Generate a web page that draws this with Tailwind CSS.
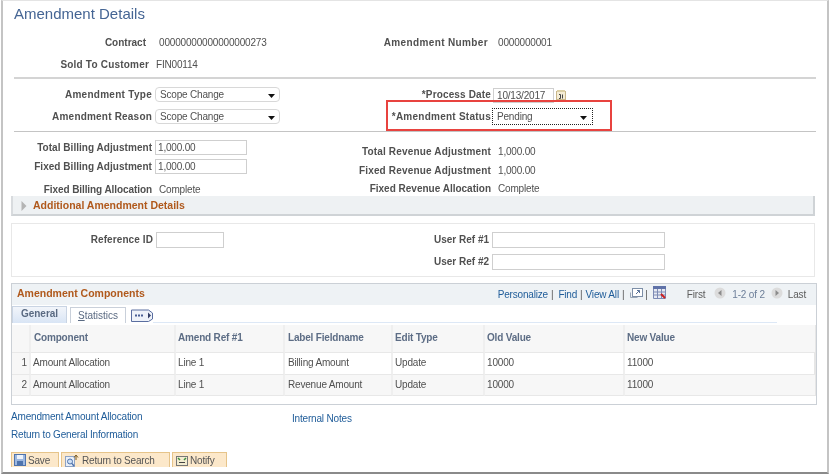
<!DOCTYPE html>
<html lang="en">

<head>
    <meta charset="UTF-8" />
    <title>Amendment Details</title>
    <script src="https://cdn.jsdelivr.net/npm/@tailwindcss/browser@4"></script>
</head>

<body class="bg-white">
    <div class="relative ml-px w-[828px] h-[474px] box-border border-t border-t-[#e4e4e4] border-l-2 border-l-[#c4c4c4] border-r-2 border-r-[#c4c4c4] border-b-2 border-b-[#8a8a8a] overflow-hidden blur-[0.3px] font-['Liberation_Sans',Arial,sans-serif] text-[10px] tracking-[-0.18px] text-[#505050]">

        <!-- Title -->
        <div class="h-[27px] pl-[11px] text-[15px] tracking-normal leading-[25px] text-[#456594]">Amendment Details</div>

        <!-- Contract -->
        <div class="flex h-[28px] items-center">
            <div class="w-[143px] text-right tracking-normal font-bold">Contract</div>
            <div class="w-[225px] pl-[13px] pt-px">00000000000000000273</div>
            <div class="w-[117px] text-right tracking-[0.37px] font-bold">Amendment Number</div>
            <div class="pl-[10px] pt-px">0000000001</div>
        </div>
        <div class="flex h-[16px] items-center">
            <div class="w-[146px] text-right tracking-[0.2px] font-bold">Sold To Customer</div>
            <div class="pl-[7px]">FIN00114</div>
        </div>
        <div class="mt-[5px] ml-[11px] w-[802px] h-[2px] bg-[#d4d4d4]"></div>

        <!-- Type / Reason / Date / Status -->
        <div class="flex mt-[8px] h-[15px] items-center">
            <div class="w-[149px] text-right tracking-[0.28px] font-bold">Amendment Type</div>
            <div class="ml-[3px] w-[125px] h-[15px] box-border border border-[#d8d8d8] rounded-sm flex items-center justify-between pl-[4px] pr-[2px]">
                <span>Scope Change</span>
                <svg width="7" height="4" viewBox="0 0 7 4" class="mr-[2px] mt-[2px]"><path d="M0 0h7L3.500 4z" fill="#111" /></svg>
            </div>
            <div class="w-[211px] text-right tracking-[0.15px] font-bold">*Process Date</div>
            <div class="ml-[2px] mt-[2px] w-[61px] h-[15px] box-border border border-[#cfcfcf] pl-[3px] leading-[14px]">10/13/2017</div>
            <svg width="10" height="10" viewBox="0 0 10 10" class="ml-[2px] mt-[1px]">
                <rect x="0.500" y="1.500" width="9" height="8" fill="#f5edd6" stroke="#c9b78a" />
                <rect x="1" y="0" width="8" height="2" fill="#dccfa5" />
                <path d="M3 4.500h1.500v4H3M6.500 4.500v4" stroke="#444" fill="none" />
            </svg>
        </div>
        <div class="flex mt-[7px] h-[15px] items-center">
            <div class="w-[149px] text-right tracking-[0.2px] font-bold">Amendment Reason</div>
            <div class="ml-[3px] w-[125px] h-[15px] box-border border border-[#d8d8d8] rounded-sm flex items-center justify-between pl-[4px] pr-[2px]">
                <span>Scope Change</span>
                <svg width="7" height="4" viewBox="0 0 7 4" class="mr-[2px] mt-[2px]"><path d="M0 0h7L3.500 4z" fill="#111" /></svg>
            </div>
            <div class="w-[211px] text-right tracking-[0.25px] font-bold">*Amendment Status</div>
            <div class="ml-[1px] w-[101px] h-[17px] box-border border border-dotted border-[#222] flex items-center justify-between pl-[4px] pr-[2px]">
                <span>Pending</span>
                <svg width="7" height="4" viewBox="0 0 7 4" class="mr-[3px] mt-[2px]"><path d="M0 0h7L3.500 4z" fill="#111" /></svg>
            </div>
        </div>
        <div class="mt-[7px] ml-[11px] w-[802px] h-px bg-[#c4c4c4]"></div>

        <!-- Highlight drawn over the status row -->
        <div class="absolute left-[383px] top-[99px] w-[226px] h-[31px] box-border border-[2px] border-[#e8433f]"></div>

        <!-- Adjustments -->
        <div class="flex h-[64px]">
            <div class="w-[244px] pt-[8px]">
                <div class="flex h-[15px] items-center">
                    <div class="w-[149px] text-right tracking-[0.04px] font-bold">Total Billing Adjustment</div>
                    <div class="ml-[3px] w-[92px] h-[15px] box-border border border-[#cfcfcf] pl-[2px] leading-[14px]">1,000.00</div>
                </div>
                <div class="flex h-[15px] items-center mt-[4px]">
                    <div class="w-[149px] text-right tracking-[0.04px] font-bold">Fixed Billing Adjustment</div>
                    <div class="ml-[3px] w-[92px] h-[15px] box-border border border-[#cfcfcf] pl-[2px] leading-[14px]">1,000.00</div>
                </div>
                <div class="flex h-[14px] items-center mt-[8px]">
                    <div class="w-[149px] text-right tracking-[-0.08px] font-bold">Fixed Billing Allocation</div>
                    <div class="pl-[7px]">Complete</div>
                </div>
            </div>
            <div class="pt-[12px]">
                <div class="flex h-[14px] items-center">
                    <div class="w-[244px] text-right tracking-[0.17px] font-bold">Total Revenue Adjustment</div>
                    <div class="pl-[7px] pt-px">1,000.00</div>
                </div>
                <div class="flex h-[14px] items-center mt-[5px]">
                    <div class="w-[244px] text-right tracking-[0.17px] font-bold">Fixed Revenue Adjustment</div>
                    <div class="pl-[7px] pt-px">1,000.00</div>
                </div>
                <div class="flex h-[14px] items-center mt-[4px]">
                    <div class="w-[244px] text-right tracking-normal font-bold">Fixed Revenue Allocation</div>
                    <div class="pl-[7px] pt-px">Complete</div>
                </div>
            </div>
        </div>

        <!-- Collapsed section -->
        <div class="ml-[8px] w-[804px] h-[20px] box-border bg-[#eef1f3] border-l-2 border-l-[#d8dbde] border-r-2 border-r-[#cfd3d6] border-b-2 border-b-[#cfd3d6] flex items-center pt-px">
            <svg width="6" height="10" viewBox="0 0 6 10" class="ml-[8px]"><path d="M0.500 0v10L5.500 5z" fill="#b4b4b4" /></svg>
            <span class="ml-[6px] text-[10.500px] tracking-normal font-bold text-[#b0591c]">Additional Amendment Details</span>
        </div>

        <!-- References -->
        <div class="mt-[7px] ml-[8px] w-[804px] h-[54px] box-border border border-[#e8e8e8] pt-[8px]">
            <div class="flex h-[16px] items-center">
                <div class="w-[141px] mb-[2px] text-right tracking-[0.1px] font-bold">Reference ID</div>
                <div class="ml-[3px] w-[68px] h-[16px] box-border border border-[#cfcfcf]"></div>
                <div class="w-[265px] mb-[2px] text-right tracking-normal font-bold">User Ref #1</div>
                <div class="ml-[3px] w-[173px] h-[16px] box-border border border-[#cfcfcf]"></div>
            </div>
            <div class="flex h-[16px] items-center mt-[6px]">
                <div class="w-[477px] mb-[2px] text-right tracking-normal font-bold">User Ref #2</div>
                <div class="ml-[3px] w-[173px] h-[16px] box-border border border-[#cfcfcf]"></div>
            </div>
        </div>

        <!-- Grid -->
        <div class="mt-[6px] ml-[8px] w-[806px] h-[122px] box-border border border-[#cbd0d6]">
            <div class="h-[21px] bg-[#eef2f5] flex items-center pl-[5px] pb-[1px]">
                <span class="text-[10.500px] tracking-normal font-bold text-[#b0591c]">Amendment Components</span>
                <div class="ml-auto flex items-center text-[#5c5c5c]">
                    <span class="text-[#1f5c99]">Personalize</span>
                    <span class="ml-[3px]">|</span>
                    <span class="ml-[5px] text-[#1f5c99]">Find</span>
                    <span class="ml-[3px]">|</span>
                    <span class="ml-[3px] text-[#1f5c99]">View All</span>
                    <span class="ml-[3px]">|</span>
                    <svg width="13" height="11" viewBox="0 0 13 11" class="ml-[6px] mb-[2px]">
                        <path d="M0.500 4.500v5h7" fill="none" stroke="#9aa7b8" />
                        <rect x="2.500" y="0.500" width="10" height="8" fill="#fff" stroke="#7d8fa8" />
                        <path d="M6 6l3.500-3.500M7 2.500h2.500V5" fill="none" stroke="#5a7398" />
                    </svg>
                    <span class="ml-[2px]">|</span>
                    <svg width="13" height="13" viewBox="0 0 13 13" class="ml-[5px] mb-[3px]">
                        <rect x="0" y="0" width="13" height="3" fill="#5f72a8" />
                        <path d="M0.500 3v9.500h12V3M4.500 3v9.500M8.500 3v9.500M0.500 6h12M0.500 9h12" fill="#e6e9f2" stroke="#7d8bb5" />
                        <path d="M8 8l4 4" stroke="#cc2020" stroke-width="2" />
                    </svg>
                    <span class="ml-[21px]">First</span>
                    <svg width="12" height="12" viewBox="0 0 12 12" class="ml-[9px] mb-[2px]">
                        <circle cx="6" cy="6" r="5.500" fill="#dcdcdc" />
                        <path d="M7.500 3v6L4 6z" fill="#8c8c8c" />
                    </svg>
                    <span class="ml-[6px] text-[#6d7f99]">1-2 of 2</span>
                    <svg width="12" height="12" viewBox="0 0 12 12" class="ml-[6px] mb-[2px]">
                        <circle cx="6" cy="6" r="5.500" fill="#dcdcdc" />
                        <path d="M4.500 3v6L8 6z" fill="#8c8c8c" />
                    </svg>
                    <span class="ml-[5px] mr-[10px]">Last</span>
                </div>
            </div>

            <!-- Tabs -->
            <div class="flex items-end h-[18px] pt-px">
                <div class="w-[55px] h-[17px] box-border border border-b-0 border-[#c9d4e3] bg-linear-to-b from-[#f2f5fa] to-[#d9e5f5] text-center tracking-normal font-bold leading-[14px] text-[#5a6a82]">General</div>
                <div class="ml-[3px] w-[56px] h-[16px] box-border border border-b-0 border-[#c9d0da] text-center tracking-normal leading-[15px] text-[#5a6a82]"><span class="underline">S</span>tatistics</div>
                <svg width="22" height="13" viewBox="0 0 22 13" class="ml-[5px] mb-px">
                    <path d="M0.500 1h17l4 3v6l-4 2.500h-17z" fill="#eef2f9" stroke="#5a6ea0" />
                    <path d="M4 6.500h9" stroke="#4a5f95" stroke-width="2" stroke-dasharray="2 1" />
                    <path d="M17 3.500v6l3-3z" fill="#333e66" />
                </svg>
                <div class="flex-1 mr-[39px] h-px bg-[#dde8f6]"></div>
            </div>

            <!-- Table -->
            <div class="mt-[2px] grid grid-cols-[19px_145px_109px_108px_92px_140px_190px] grid-rows-[27px_22px_22px] border-r-2 border-r-[#e6e6e6]">
                <div class="bg-[#f7f7f7] border-r-2 border-[#efefef]"></div>
                <div class="bg-[#f7f7f7] border-r-2 border-[#efefef] pl-[3px] pb-[2px] flex items-center font-bold text-[#5d6d85]">Component</div>
                <div class="bg-[#f7f7f7] border-r-2 border-[#efefef] pl-[2px] pb-[2px] flex items-center font-bold text-[#5d6d85]">Amend Ref #1</div>
                <div class="bg-[#f7f7f7] border-r-2 border-[#efefef] pl-[3px] pb-[2px] flex items-center font-bold text-[#5d6d85]">Label Fieldname</div>
                <div class="bg-[#f7f7f7] border-r-2 border-[#efefef] pl-[2px] pb-[2px] flex items-center font-bold text-[#5d6d85]">Edit Type</div>
                <div class="bg-[#f7f7f7] border-r-2 border-[#efefef] pl-[2px] pb-[2px] flex items-center font-bold text-[#5d6d85]">Old Value</div>
                <div class="bg-[#f7f7f7] pl-[2px] pb-[2px] flex items-center font-bold text-[#5d6d85]">New Value</div>

                <div class="bg-[#f7f7f7] border-t border-[#e8e8e8] border-r-2 border-r-[#efefef] pr-[2px] pb-[2px] flex items-center justify-end">1</div>
                <div class="border-t border-[#e8e8e8] border-r-2 border-r-[#efefef] pl-[2px] pb-[2px] flex items-center">Amount Allocation</div>
                <div class="border-t border-[#e8e8e8] border-r-2 border-r-[#efefef] pl-[2px] pb-[2px] flex items-center">Line 1</div>
                <div class="border-t border-[#e8e8e8] border-r-2 border-r-[#efefef] pl-[3px] pb-[2px] flex items-center">Billing Amount</div>
                <div class="border-t border-[#e8e8e8] border-r-2 border-r-[#efefef] pl-[2px] pb-[2px] flex items-center">Update</div>
                <div class="border-t border-[#e8e8e8] border-r-2 border-r-[#efefef] pl-[2px] pb-[2px] flex items-center">10000</div>
                <div class="border-t border-[#e8e8e8] pl-[2px] pb-[2px] flex items-center">11000</div>

                <div class="bg-[#f7f7f7] border-y border-[#e8e8e8] border-r-2 border-r-[#efefef] pr-[2px] pb-[1px] flex items-center justify-end">2</div>
                <div class="bg-[#f7f7f7] border-y border-[#e8e8e8] border-r-2 border-r-[#efefef] pl-[2px] pb-[1px] flex items-center">Amount Allocation</div>
                <div class="bg-[#f7f7f7] border-y border-[#e8e8e8] border-r-2 border-r-[#efefef] pl-[2px] pb-[1px] flex items-center">Line 1</div>
                <div class="bg-[#f7f7f7] border-y border-[#e8e8e8] border-r-2 border-r-[#efefef] pl-[3px] pb-[1px] flex items-center">Revenue Amount</div>
                <div class="bg-[#f7f7f7] border-y border-[#e8e8e8] border-r-2 border-r-[#efefef] pl-[2px] pb-[1px] flex items-center">Update</div>
                <div class="bg-[#f7f7f7] border-y border-[#e8e8e8] border-r-2 border-r-[#efefef] pl-[2px] pb-[1px] flex items-center">10000</div>
                <div class="bg-[#f7f7f7] border-y border-[#e8e8e8] pl-[2px] pb-[1px] flex items-center">11000</div>
            </div>
        </div>

        <!-- Links -->
        <div class="flex mt-[5px] pl-[8px] text-[#1f5c99]">
            <div class="w-[281px]">
                <div class="h-[14px] leading-[14px]">Amendment Amount Allocation</div>
                <div class="h-[14px] leading-[14px] mt-[4px]">Return to General Information</div>
            </div>
            <div class="mt-[2px] h-[14px] leading-[14px]">Internal Notes</div>
        </div>

        <!-- Toolbar -->
        <div class="flex mt-[10px] ml-[8px] text-[#555]">
            <div class="w-[48px] h-[15px] box-border border border-b-0 border-[#e6c48a] bg-[#fce8ca] flex items-center">
                <svg width="12" height="12" viewBox="0 0 12 12" class="ml-[2px]">
                    <rect x="0.500" y="0.500" width="11" height="11" fill="#9db8e0" stroke="#4f74ad" />
                    <rect x="3" y="1" width="6" height="4" fill="#eef3fb" />
                    <rect x="3" y="7" width="6" height="4.500" fill="#4f74ad" />
                </svg>
                <span class="ml-[2px]">Save</span>
            </div>
            <div class="ml-[2px] w-[109px] h-[15px] box-border border border-b-0 border-[#e6c48a] bg-[#fce8ca] flex items-center">
                <svg width="14" height="13" viewBox="0 0 14 13" class="ml-[3px]">
                    <rect x="0.500" y="2.500" width="9" height="10" fill="#e9eff8" stroke="#8ea3c4" />
                    <circle cx="5" cy="7.500" r="2.500" fill="#cfe0f5" stroke="#4f74ad" />
                    <path d="M7 9.500l2 2.500" stroke="#4f74ad" stroke-width="1.500" />
                    <path d="M11 6V2M9 3.500L11 1l2 2.500" fill="none" stroke="#7a5a20" />
                </svg>
                <span class="ml-[3px]">Return to Search</span>
            </div>
            <div class="ml-[2px] w-[55px] h-[15px] box-border border border-b-0 border-[#e6c48a] bg-[#fce8ca] flex items-center">
                <svg width="12" height="11" viewBox="0 0 12 11" class="ml-[3px]">
                    <rect x="0.500" y="1.500" width="11" height="9" fill="#f3ecd0" stroke="#777" />
                    <path d="M2 3l2 2M10 3L8 5" stroke="#3f8f3f" stroke-width="1.500" />
                    <path d="M3 7.500h6" stroke="#444" />
                </svg>
                <span class="ml-[2px]">Notify</span>
            </div>
        </div>
    </div>
</body>

</html>
